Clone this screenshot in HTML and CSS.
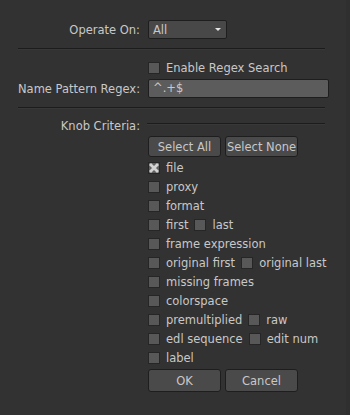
FILE: index.html
```html
<!DOCTYPE html>
<html lang="en">
<head>
    <title>Search Replace</title>
    <link rel="stylesheet" href="styles.css">
</head>

<body>
<div id="panel">
    <div class="row row-operate">
        <label class="label">Operate On:</label>
        <div class="dropdown">
            <span>All</span>
            <span class="arrow"></span>
        </div>
    </div>

    <div class="separator"></div>

    <div class="row row-enable">
        <span class="label"></span>
        <div class="check"><span class="box"></span><span>Enable Regex Search</span></div>
    </div>

    <div class="row row-regex">
        <label class="label">Name Pattern Regex:</label>
        <div class="textfield">^.+$</div>
    </div>

    <div class="separator"></div>

    <div class="row row-knob">
        <span class="label">Knob Criteria:</span>
        <div class="knob-line"></div>
    </div>

    <div class="row row-buttons">
        <span class="label"></span>
        <div class="buttons">
            <button>Select All</button>
            <button>Select None</button>
        </div>
    </div>

    <div class="row row-checks">
        <span class="label"></span>
        <div class="checklist">
            <div class="check">
                <span class="box checked">
                    <svg width="10" height="10" viewBox="0 0 10 10"><path d="M1 1 L9 9 M9 1 L1 9" stroke="#d2d2d2" stroke-width="2.8"/></svg>
                </span><span>file</span>
            </div>
            <div class="check"><span class="box"></span><span>proxy</span></div>
            <div class="check"><span class="box"></span><span>format</span></div>
            <div class="check"><span class="box"></span><span>first</span><span class="box"></span><span>last</span></div>
            <div class="check"><span class="box"></span><span>frame expression</span></div>
            <div class="check"><span class="box"></span><span>original first</span><span class="box"></span><span>original last</span></div>
            <div class="check"><span class="box"></span><span>missing frames</span></div>
            <div class="check"><span class="box"></span><span>colorspace</span></div>
            <div class="check"><span class="box"></span><span>premultiplied</span><span class="box"></span><span>raw</span></div>
            <div class="check"><span class="box"></span><span>edl sequence</span><span class="box"></span><span>edit num</span></div>
            <div class="check"><span class="box"></span><span>label</span></div>
        </div>
    </div>

    <div class="row row-ok">
        <span class="label"></span>
        <div class="buttons">
            <button>OK</button>
            <button>Cancel</button>
        </div>
    </div>
</div>
</body>
</html>
```

FILE: styles.css
```css
body {
    margin: 0;
    padding: 0;
    background-color: #323232;
    color: #c8c8c8;
    font-family: "DejaVu Sans", Verdana, sans-serif;
    font-size: 11.5px;
    width: 350px;
    height: 415px;
    overflow: hidden;
}

#panel {
    padding: 20px 21px 0 18px;
    height: 415px;
    box-sizing: border-box;
    border-right: 4px solid #2f2f2f;
}

.row {
    display: grid;
    grid-template-columns: 122px 1fr;
    column-gap: 8px;
    align-items: center;
}

.label {
    text-align: right;
    white-space: nowrap;
}

.row-operate {
    height: 19px;
}

.dropdown {
    width: 79px;
    height: 19px;
    box-sizing: border-box;
    background-color: #484848;
    border: 1px solid #1e1e1e;
    border-radius: 2px;
    display: flex;
    align-items: center;
    justify-content: space-between;
    padding: 0 5px 0 4px;
}

.arrow {
    width: 0;
    height: 0;
    border-left: 3px solid transparent;
    border-right: 3px solid transparent;
    border-top: 3px solid #e6e6e6;
}

.separator {
    height: 1px;
    background-color: #1c1c1c;
    border-bottom: 1px solid #383838;
    margin-top: 9px;
}

.row-enable {
    margin-top: 12px;
    height: 12px;
}

.row-regex {
    margin-top: 5px;
    height: 19px;
}

.textfield {
    height: 19px;
    width: 181px;
    box-sizing: border-box;
    background-color: #5c5c5c;
    border: 1px solid #1e1e1e;
    border-radius: 2px;
    padding: 0 4px;
    line-height: 17px;
}

.row-knob {
    margin-top: 8px;
    height: 18px;
}

.knob-line {
    height: 1px;
    background-color: #1c1c1c;
    border-bottom: 1px solid #383838;
    margin-left: -1px;
    margin-top: -4px;
}

.row-buttons {
    margin-top: 1px;
}

.buttons {
    display: flex;
    gap: 4px;
}

button {
    width: 73px;
    height: 21px;
    background-color: #4a4a4a;
    color: #c8c8c8;
    font-family: "DejaVu Sans", Verdana, sans-serif;
    font-size: 11.5px;
    border: 1px solid #1e1e1e;
    border-radius: 3px;
    padding: 0;
}

.row-checks {
    margin-top: 5px;
    align-items: start;
}

.checklist {
    display: flex;
    flex-direction: column;
    gap: 7px;
}

.check {
    display: flex;
    align-items: center;
    height: 12px;
    white-space: nowrap;
}

.box {
    width: 12px;
    height: 12px;
    box-sizing: border-box;
    background-color: #585858;
    border: 1px solid #262626;
    margin-right: 6px;
    display: inline-flex;
    align-items: center;
    justify-content: center;
}

.box ~ .box {
    margin-left: 6px;
}

.box.checked {
    background-color: #606060;
}

.row-ok {
    margin-top: 5px;
}

.row-ok button {
    height: 23px;
}
```
